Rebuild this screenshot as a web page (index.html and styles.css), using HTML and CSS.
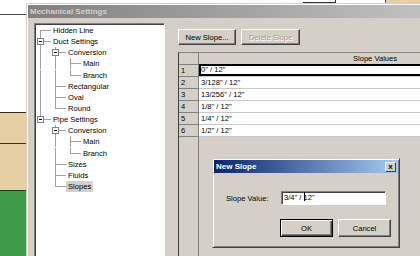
FILE: index.html
```html
<!DOCTYPE html>
<html lang="en">
<head>
    <meta charset="UTF-8">
    <meta name="viewport" content="width=device-width, initial-scale=1.0">
    <title>Mechanical Settings</title>
    <link rel="stylesheet" href="styles.css">
</head>
<body>
    <div class="desk">
        <div class="side">
            <div class="side-white"></div>
            <div class="side-tan"></div>
            <div class="side-green"></div>
        </div>
        <div class="top">
            <span class="top-box"></span>
            <span class="top-tan"></span>
        </div>

        <div class="win">
            <div class="titlebar inactive">Mechanical Settings</div>
            <div class="win-body">
                <div class="tree">
                    <div class="node"><span class="g first"></span><span class="label">Hidden Line</span></div>
                    <div class="node"><span class="g tee"><i class="box"></i></span><span class="label">Duct Settings</span></div>
                    <div class="node"><span class="g line"></span><span class="g tee"><i class="box"></i></span><span class="label">Conversion</span></div>
                    <div class="node"><span class="g line"></span><span class="g line"></span><span class="g tee"></span><span class="label">Main</span></div>
                    <div class="node"><span class="g line"></span><span class="g line"></span><span class="g end"></span><span class="label">Branch</span></div>
                    <div class="node"><span class="g line"></span><span class="g tee"></span><span class="label">Rectangular</span></div>
                    <div class="node"><span class="g line"></span><span class="g tee"></span><span class="label">Oval</span></div>
                    <div class="node"><span class="g line"></span><span class="g end"></span><span class="label">Round</span></div>
                    <div class="node"><span class="g end"><i class="box"></i></span><span class="label">Pipe Settings</span></div>
                    <div class="node"><span class="g"></span><span class="g tee"><i class="box"></i></span><span class="label">Conversion</span></div>
                    <div class="node"><span class="g"></span><span class="g line"></span><span class="g tee"></span><span class="label">Main</span></div>
                    <div class="node"><span class="g"></span><span class="g line"></span><span class="g end"></span><span class="label">Branch</span></div>
                    <div class="node"><span class="g"></span><span class="g tee"></span><span class="label">Sizes</span></div>
                    <div class="node"><span class="g"></span><span class="g tee"></span><span class="label">Fluids</span></div>
                    <div class="node"><span class="g"></span><span class="g end"></span><span class="label selected">Slopes</span></div>
                </div>

                <div class="pane">
                    <div class="toolbar">
                        <button class="btn new-btn">New Slope...</button>
                        <button class="btn del-btn" disabled>Delete Slope</button>
                    </div>
                    <div class="grid">
                        <div class="rowhdr">
                            <div class="corner"></div>
                            <div class="num">1</div>
                            <div class="num">2</div>
                            <div class="num">3</div>
                            <div class="num">4</div>
                            <div class="num">5</div>
                            <div class="num">6</div>
                        </div>
                        <div class="values">
                            <div class="colhdr">Slope Values</div>
                            <div class="cell current">0" / 12"</div>
                            <div class="cell">3/128" / 12"</div>
                            <div class="cell">13/256" / 12"</div>
                            <div class="cell">1/8" / 12"</div>
                            <div class="cell">1/4" / 12"</div>
                            <div class="cell">1/2" / 12"</div>
                        </div>
                    </div>
                </div>
            </div>
        </div>

        <div class="dlg">
            <div class="titlebar active">
                <span>New Slope</span>
                <span class="close">x</span>
            </div>
            <div class="dlg-body">
                <div class="form-row">
                    <span class="form-label">Slope Value:</span>
                    <div class="field">3/4" / <span class="caret"></span>12"</div>
                </div>
                <div class="dlg-buttons">
                    <button class="btn dbtn default">OK</button>
                    <button class="btn dbtn">Cancel</button>
                </div>
            </div>
        </div>
    </div>
</body>
</html>
```

FILE: styles.css
```css
body {
    margin: 0;
    width: 420px;
    height: 256px;
    overflow: hidden;
    font-family: "Liberation Sans", Arial, sans-serif;
    font-size: 7.6px;
    color: #000;
    background-color: #fff;
}
.desk {
    position: relative;
    display: grid;
    grid-template-columns: 26px 1fr;
    grid-template-rows: 3px 280px;
    height: 256px;
    overflow: hidden;
}

/* drawing behind the dialog */
.side {
    grid-row: 1 / 3;
    display: flex;
    flex-direction: column;
}
.side-white {
    height: 112px;
    background: linear-gradient(#4a4a4a, #4a4a4a) 0 14px / 100% 1px no-repeat, #fff;
}
.side-tan {
    height: 77px;
    border-top: 1px solid #2e2a1e;
    background: linear-gradient(#3a3222, #3a3222) 0 30px / 100% 1px no-repeat, #e6cfa2;
}
.side-green {
    flex: 1;
    border-top: 1px solid #243a22;
    background-color: #3f9b48;
}
.top {
    display: flex;
    background-color: #fff;
}
.top-box {
    margin-left: 277px;
    width: 32px;
    border-right: 1px solid #333;
    border-bottom: 1px solid #333;
}
.top-tan {
    margin-left: auto;
    width: 34px;
    border-left: 1px solid #6b5a3a;
    background-color: #e6cfa2;
}

/* main window */
.win {
    grid-column: 2;
    grid-row: 2;
    display: flex;
    flex-direction: column;
    background-color: #d4d0c8;
    border-top: 1px solid #d4d0c8;
    border-left: 1px solid #d4d0c8;
    box-shadow: inset 1px 1px #fff;
    padding: 1px 0 0 1px;
    overflow: hidden;
}
.titlebar {
    height: 13px;
    display: flex;
    align-items: center;
    font-weight: bold;
    font-size: 8px;
    padding-left: 2px;
    flex: none;
}
.titlebar.inactive {
    background: linear-gradient(to right, #808080, #c0c0c0);
    color: #d4d0c8;
}
.titlebar.active {
    background: linear-gradient(to right, #0a246a, #a6caf0);
    color: #fff;
    justify-content: space-between;
    padding-right: 2px;
}
.win-body {
    flex: 1;
    display: flex;
    gap: 13px;
    padding: 5px 0 0 6px;
}

/* tree */
.tree {
    width: 128px;
    flex: none;
    background-color: #fff;
    border: 1px solid;
    border-color: #808080 #fff #fff #808080;
    box-shadow: inset 1px 1px #404040;
    padding: 1px 0 0 1px;
}
.node {
    display: flex;
    height: 11.15px;
    line-height: 11px;
    white-space: nowrap;
}
.g {
    width: 15px;
    height: 11px;
    flex: none;
    display: flex;
    align-items: center;
}
.g.line {
    background: linear-gradient(#a0a0a0, #a0a0a0) 4px 0 / 1px 100% no-repeat;
}
.g.tee {
    background:
        linear-gradient(#a0a0a0, #a0a0a0) 4px 0 / 1px 100% no-repeat,
        linear-gradient(#a0a0a0, #a0a0a0) 4px 5px / 11px 1px no-repeat;
}
.g.end {
    background:
        linear-gradient(#a0a0a0, #a0a0a0) 4px 0 / 1px 6px no-repeat,
        linear-gradient(#a0a0a0, #a0a0a0) 4px 5px / 11px 1px no-repeat;
}
.g.first {
    background:
        linear-gradient(#a0a0a0, #a0a0a0) 4px 5px / 1px 6px no-repeat,
        linear-gradient(#a0a0a0, #a0a0a0) 4px 5px / 11px 1px no-repeat;
}
.box {
    width: 7px;
    height: 7px;
    margin-left: 1px;
    box-sizing: border-box;
    border: 1px solid #808080;
    background: linear-gradient(#000, #000) center / 3px 1px no-repeat, #fff;
}
.label {
    padding: 0 2px;
}
.label.selected {
    background-color: #d4d0c8;
}

/* right pane */
.pane {
    flex: 1;
    display: flex;
    flex-direction: column;
    padding-top: 6px;
}
.toolbar {
    display: flex;
    gap: 5px;
}
.btn {
    height: 16px;
    padding: 0;
    font-family: inherit;
    font-size: 7.6px;
    color: #000;
    background-color: #d4d0c8;
    border: 1px solid;
    border-color: #fff #404040 #404040 #fff;
    box-shadow: inset -1px -1px #808080;
}
.new-btn {
    width: 58px;
}
.del-btn {
    width: 59px;
}
.btn:disabled {
    color: #a09c94;
    text-shadow: 1px 1px #fff;
}
.grid {
    margin-top: 7px;
    flex: 1;
    display: flex;
    width: 372px;
    border-top: 1px solid #808080;
    border-left: 1px solid #404040;
}
.rowhdr {
    width: 19px;
    flex: none;
    border-right: 1px solid #808080;
}
.corner,
.colhdr {
    height: 11px;
    border-bottom: 1px solid #808080;
    line-height: 11px;
}
.colhdr {
    text-align: center;
}
.num {
    height: 11px;
    line-height: 11px;
    padding-left: 2px;
    border-bottom: 1px solid #808080;
}
.values {
    flex: 1;
}
.cell {
    height: 11px;
    line-height: 11px;
    padding-left: 2px;
    background-color: #fff;
    border-bottom: 1px solid #c8c8c8;
    white-space: nowrap;
}
.cell.current {
    box-shadow: inset 0 0 0 2px #000;
    height: 12px;
    margin-top: -1px;
    line-height: 12px;
}

/* new slope dialog */
.dlg {
    position: absolute;
    left: 212px;
    top: 158px;
    width: 184px;
    height: 86px;
    padding: 1px;
    background-color: #d4d0c8;
    border: 1px solid;
    border-color: #d4d0c8 #404040 #404040 #d4d0c8;
    box-shadow: inset 1px 1px #fff, inset -1px -1px #808080;
}
.close {
    width: 11px;
    height: 10px;
    box-sizing: border-box;
    background-color: #d4d0c8;
    border: 1px solid;
    border-color: #fff #404040 #404040 #fff;
    color: #000;
    font-size: 8px;
    font-weight: bold;
    line-height: 7px;
    text-align: center;
}
.dlg-body {
    padding: 18px 7px 0 12px;
}
.form-row {
    display: flex;
    align-items: center;
}
.form-label {
    width: 55px;
}
.field {
    width: 101px;
    height: 12px;
    line-height: 12px;
    padding-left: 2px;
    background-color: #fff;
    border: 1px solid;
    border-color: #808080 #fff #fff #808080;
    box-shadow: inset 1px 1px #404040;
    white-space: nowrap;
}
.caret {
    display: inline-block;
    width: 1px;
    height: 9px;
    margin-right: -1px;
    vertical-align: -1px;
    background-color: #000;
}
.dlg-buttons {
    display: flex;
    justify-content: flex-end;
    gap: 5px;
    margin-top: 14px;
}
.dbtn {
    width: 53px;
    height: 18px;
}
.dbtn.default {
    border: 1px solid #000;
    box-shadow: inset 1px 1px #fff, inset -1px -1px #404040, inset -2px -2px #808080;
}
```
